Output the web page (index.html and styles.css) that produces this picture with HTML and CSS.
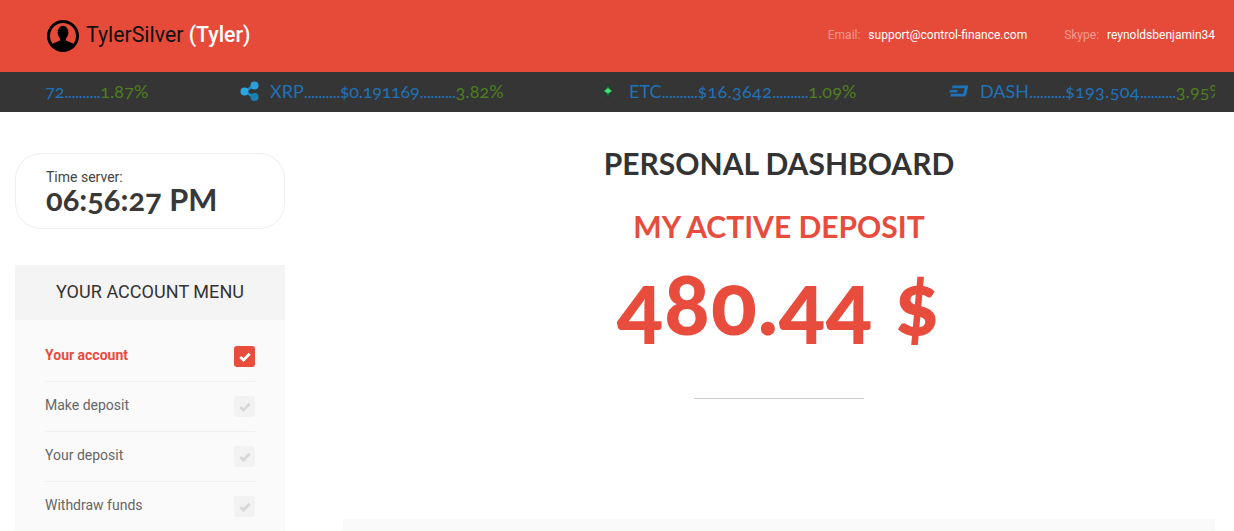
FILE: index.html
```html
<!DOCTYPE html>
<html lang="en">
<head>
<meta charset="utf-8">
<title>Personal dashboard</title>
<link rel="stylesheet" href="styles.css">
</head>
<body>
<header class="topbar">
  <div class="user">
    <svg class="user-icon" viewBox="0 0 32 32" aria-hidden="true">
      <defs><clipPath id="uc"><circle cx="16" cy="16" r="14"/></clipPath></defs>
      <circle cx="16" cy="16" r="14.500" fill="#e64b3a" stroke="#000" stroke-width="3"/>
      <g clip-path="url(#uc)" fill="#000">
        <ellipse cx="16" cy="12.500" rx="5.400" ry="6.800"/>
        <path d="M13 18h6v2.500l6.500 2.700c1.600.7 2.500 2 2.500 4V32H4v-4.800c0-2 .9-3.300 2.500-4l6.500-2.700z"/>
      </g>
    </svg>
    <span class="user-name">TylerSilver <b>(Tyler)</b></span>
  </div>
  <div class="contacts">
    <span class="contact"><span class="contact-label">Email:</span> support@control-finance.com</span>
    <span class="contact"><span class="contact-label">Skype:</span> reynoldsbenjamin34</span>
  </div>
</header>

<div class="ticker">
  <div class="ticker-track">
    <div class="tick tick-first"><span class="blue tight">:72</span><span class="blue dots">..........</span><span class="green">1.87%</span></div>
    <div class="tick tick-xrp">
      <svg class="coin" viewBox="0 0 20 20" aria-hidden="true">
        <path d="M14.500 4 5 10.500l9.500 6" fill="none" stroke="#1f88c0" stroke-width="2.600"/>
        <circle cx="14.500" cy="4.500" r="4" fill="#2aa0dc"/><circle cx="4.500" cy="10.500" r="4" fill="#2aa8e4"/><circle cx="14.500" cy="16" r="4" fill="#1a7fb5"/>
      </svg>
      <span class="blue">XRP</span><span class="blue dots">..........</span><span class="blue tight">$0.191169</span><span class="blue dots">..........</span><span class="green">3.82%</span>
    </div>
    <div class="tick tick-etc">
      <svg class="coin coin-etc" viewBox="0 0 10 16" aria-hidden="true">
        <path d="M5 0 10 8 5 16 0 8z" fill="#24382c"/>
        <path d="M5 2.500 8.500 8 5 13.500 1.500 8z" fill="#1d6b3a"/>
        <path d="M5 5 9 8 5 10.500 1 8z" fill="#45d873"/>
      </svg>
      <span class="blue">ETC</span><span class="blue dots">..........</span><span class="blue price">$16.3642</span><span class="blue dots">..........</span><span class="green">1.09%</span>
    </div>
    <div class="tick tick-dash">
      <svg class="coin coin-dash" viewBox="0 0 21 13" aria-hidden="true">
        <path d="M3.500 0.500H20.500L18.500 10.500 16.500 12.500H1L1.800 9.500H15.200L16.600 3.500H3z" fill="#1f72b8"/>
        <path d="M.8 5.300H9.200L8.500 8H0z" fill="#1f72b8"/>
      </svg>
      <span class="blue">DASH</span><span class="blue dots">..........</span><span class="blue price">$193.504</span><span class="blue dots">..........</span><span class="green">3.95%</span>
    </div>
  </div>
</div>

<div class="page">
  <aside class="sidebar">
    <div class="clock">
      <div class="clock-label">Time server:</div>
      <div class="clock-time">06:56:27 PM</div>
    </div>
    <nav class="menu">
      <h3 class="menu-title">YOUR ACCOUNT MENU</h3>
      <ul class="menu-list">
        <li class="menu-item active"><span class="menu-label">Your account</span><span class="check"><svg viewBox="0 0 12 10" aria-hidden="true"><path d="M1.300 5 4.500 8 10.700 1.800" fill="none" stroke="currentColor" stroke-width="2.800"/></svg></span></li>
        <li class="menu-item"><span class="menu-label">Make deposit</span><span class="check"><svg viewBox="0 0 12 10" aria-hidden="true"><path d="M1.300 5 4.500 8 10.700 1.800" fill="none" stroke="currentColor" stroke-width="2.800"/></svg></span></li>
        <li class="menu-item"><span class="menu-label">Your deposit</span><span class="check"><svg viewBox="0 0 12 10" aria-hidden="true"><path d="M1.300 5 4.500 8 10.700 1.800" fill="none" stroke="currentColor" stroke-width="2.800"/></svg></span></li>
        <li class="menu-item"><span class="menu-label">Withdraw funds</span><span class="check"><svg viewBox="0 0 12 10" aria-hidden="true"><path d="M1.300 5 4.500 8 10.700 1.800" fill="none" stroke="currentColor" stroke-width="2.800"/></svg></span></li>
      </ul>
    </nav>
  </aside>
  <main class="content">
    <h1 class="title">PERSONAL DASHBOARD</h1>
    <h2 class="subtitle">MY ACTIVE DEPOSIT</h2>
    <div class="amount">480.44 $</div>
    <hr class="rule">
    <div class="panel"></div>
  </main>
</div>
</body>
</html>
```
FILE: styles.css
```css
* { box-sizing: border-box; }
html, body { margin: 0; height: 531px; overflow: hidden; background: #fff; }
body { font-family: Roboto, sans-serif; color: #333; }

.topbar { height: 72px; background: #e64b3a; display: flex; justify-content: space-between; align-items: center; padding: 0 19px 0 47px; }
.user { display: flex; align-items: center; gap: 7px; }
.user-icon { width: 32px; height: 32px; display: block; }
.user-name { font-size: 21.300px; color: #111; line-height: 24px; position: relative; top: -1px; }
.user-name b { font-weight: 500; color: #fff; }
.contacts { display: flex; gap: 37px; font-size: 12px; color: #fff; position: relative; top: -1px; }
.contact-label { color: #f29a90; margin-right: 5px; }

.ticker { height: 40px; background: #353535; padding: 0 19px 0 44px; }
.ticker-track { height: 100%; overflow: hidden; display: flex; padding-bottom: 2px; font-family: Lato, sans-serif; font-size: 18px; white-space: nowrap; align-items: center; font-feature-settings: "onum"; }
.tick { display: flex; align-items: center; flex: none; }
.tick-first { width: 196px; margin-left: -3px; }
.tick-xrp { width: 363px; margin-left: 3px; }
.tick-etc { width: 346px; }
.tick-dash { width: 300px; }
.blue { color: #1f72b8; }
.green { color: #4e7f1e; letter-spacing: .1px; }
.dots { letter-spacing: -0.650px; }
.price { letter-spacing: .3px; }
.tight { letter-spacing: -.250px; }
.coin { width: 20px; height: 20px; margin-right: 10px; flex: none; }
.coin-etc { width: 10px; height: 16px; margin-right: 16px; }
.coin-dash { width: 20px; height: 12px; margin-right: 11px; }

.page { display: grid; grid-template-columns: 270px 872px; column-gap: 58px; padding: 41px 19px 0 15px; }
.clock { height: 76px; border: 1px solid #eee; border-radius: 26px; padding: 15px 30px 0; }
.clock-label { font-size: 14px; line-height: 17px; color: #444; }
.clock-time { margin-top: -1px; font-family: Lato, sans-serif; font-weight: 700; font-size: 30.800px; line-height: 30px; color: #383838; font-feature-settings: "onum"; }

.menu { margin-top: 36px; background: #fafafa; }
.menu-title { margin: 0; height: 55px; background: #f4f4f4; font-size: 18px; font-weight: 400; line-height: 53px; text-align: center; color: #333; letter-spacing: .05px; }
.menu-list { list-style: none; margin: 0; padding: 12px 30px 0; }
.menu-item { height: 50px; display: flex; justify-content: space-between; align-items: flex-start; padding-top: 14px; border-bottom: 1px solid #f0f0f0; font-size: 14px; line-height: 17px; color: #666; }
.menu-item:last-child { border-bottom: 0; }
.menu-item.active { color: #e74c3c; font-weight: 700; }
.menu-label { margin-top: 1px; }
.check { width: 21px; height: 21px; border-radius: 3px; background: #f2f2f2; color: #d8d8d8; display: flex; align-items: center; justify-content: center; }
.check svg { width: 12px; height: 10px; }
.active .check { background: #e74c3c; color: #fff; }

.content { text-align: center; }
.title { margin: 0; font-family: Lato, sans-serif; font-weight: 700; font-size: 30px; line-height: 20px; color: #333; }
.subtitle { margin: 41px 0 0; font-family: Lato, sans-serif; font-weight: 700; font-size: 30px; line-height: 24px; color: #e74c3c; }
.amount { margin-top: 19px; font-family: Lato, sans-serif; font-weight: 900; font-size: 85px; line-height: 90px; letter-spacing: 1px; color: #e74c3c; font-feature-settings: "onum"; }
.rule { width: 170px; height: 1px; margin: 51px auto 0; border: 0; background: #ccc; }
.panel { height: 12px; margin-top: 120px; background: #fafafa; }
```
